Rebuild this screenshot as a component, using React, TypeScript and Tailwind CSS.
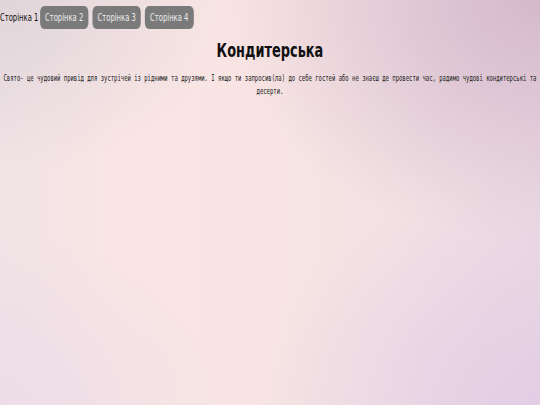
const TABS = ['Сторінка 2', 'Сторінка 3', 'Сторінка 4'];

export default function App() {
  return (
    <div className="relative h-[405px] w-[540px] overflow-hidden bg-[image:radial-gradient(ellipse_at_100%_0%,#d5b9cb_0%,rgba(213,185,203,0)_42%),radial-gradient(ellipse_at_100%_100%,#e3cde5_0%,rgba(227,205,229,0)_38%),radial-gradient(ellipse_at_0%_0%,#e0d5da_0%,rgba(224,213,218,0)_30%),radial-gradient(ellipse_at_0%_100%,#ecdde8_0%,rgba(236,221,232,0)_30%),linear-gradient(to_right,#f1e3e6_0%,#f9e5e4_22%,#f8e5e3_50%,#f2e2e4_72%,#eadae2_100%)]">
      <div className="w-[794px] origin-top-left scale-x-[0.68]">
        <nav className="flex items-center pt-[6px] font-['DejaVu_Sans',sans-serif] text-[10px]">
          <span className="mr-[2.3px] text-[#111]">Сторінка 1</span>
          <div className="flex gap-[6px]">
            {TABS.map((t) => (
              <button
                key={t}
                className="h-[23px] rounded-[6px] bg-[#7a7a7a] px-[7.5px] text-[#ececec]"
              >
                {t}
              </button>
            ))}
          </div>
        </nav>

        <h1 className="mt-[9.6px] text-center font-['DejaVu_Sans',sans-serif] text-[19px] font-bold leading-[22px] text-[#111]">
          Кондитерська
        </h1>

        <p className="mt-[11.5px] px-[4px] text-center font-['DejaVu_Sans_Mono',monospace] text-[8.2px] leading-[13px] text-[#222]">
          Свято- це чудовий привід для зустрічей із рідними та друзями. І якщо ти запросив(ла) до себе гостей або не знаєш де провести час, радимо чудові кондитерські та десерти.
        </p>
      </div>
    </div>
  );
}
